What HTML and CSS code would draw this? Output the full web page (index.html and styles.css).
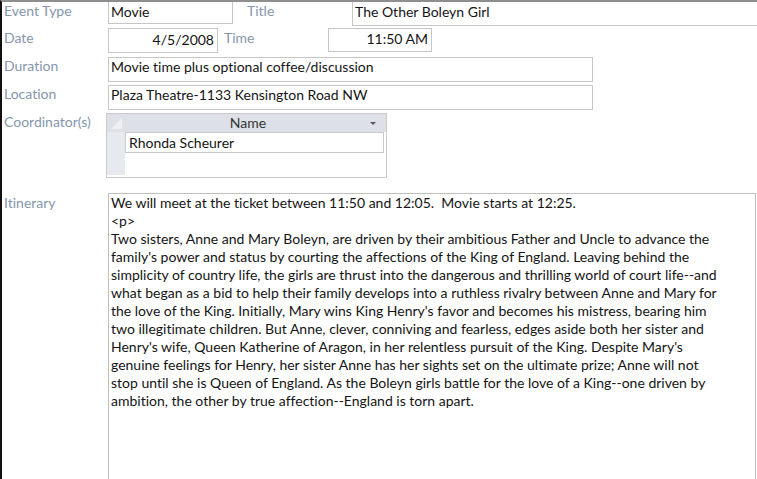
FILE: index.html
```html
<!DOCTYPE html>
<html>
<head>
<meta charset="utf-8">
<title>Event</title>
<link rel="stylesheet" href="styles.css">
</head>
<body>
<div class="form">
  <div class="row r1">
    <div class="lbl">Event Type</div>
    <div class="box box-type">Movie</div>
    <div class="lbl lbl-title">Title</div>
    <div class="box box-title">The Other Boleyn Girl</div>
  </div>
  <div class="row r2">
    <div class="lbl lbl-r2">Date</div>
    <div class="box box-date">4/5/2008</div>
    <div class="lbl lbl-r2 lbl-time">Time</div>
    <div class="box box-time">11:50 AM</div>
  </div>
  <div class="row r3">
    <div class="lbl">Duration</div>
    <div class="box box-wide">Movie time plus optional coffee/discussion</div>
  </div>
  <div class="row r3">
    <div class="lbl">Location</div>
    <div class="box box-wide">Plaza Theatre-1133 Kensington Road NW</div>
  </div>
  <div class="row r5">
    <div class="lbl">Coordinator(s)</div>
    <div class="grid">
      <div class="g-head">
        <div class="g-sel g-sel-head">
          <svg width="18" height="18" viewBox="0 0 18 18"><polygon points="4,15 15,15 15,4" fill="#eef0f3"/></svg>
        </div>
        <div class="g-col">Name<span class="g-arrow"></span></div>
      </div>
      <div class="g-row">
        <div class="g-sel"></div>
        <div class="g-cell">Rhonda Scheurer</div>
      </div>
      <div class="g-row g-new">
        <div class="g-sel"></div>
        <div class="g-blank"></div>
      </div>
    </div>
  </div>
  <div class="row r6">
    <div class="lbl lbl-itin">Itinerary</div>
    <div class="box box-itin"><div class="itin-text">We will meet at the ticket between 11:50 and 12:05.  Movie starts at 12:25.
&lt;p&gt;
Two sisters, Anne and Mary Boleyn, are driven by their ambitious Father and Uncle to advance the
family's power and status by courting the affections of the King of England. Leaving behind the
simplicity of country life, the girls are thrust into the dangerous and thrilling world of court life--and
what began as a bid to help their family develops into a ruthless rivalry between Anne and Mary for
the love of the King. Initially, Mary wins King Henry's favor and becomes his mistress, bearing him
two illegitimate children. But Anne, clever, conniving and fearless, edges aside both her sister and
Henry's wife, Queen Katherine of Aragon, in her relentless pursuit of the King. Despite Mary's
genuine feelings for Henry, her sister Anne has her sights set on the ultimate prize; Anne will not
stop until she is Queen of England. As the Boleyn girls battle for the love of a King--one driven by
ambition, the other by true affection--England is torn apart.</div></div>
  </div>
</div>
</body>
</html>
```

FILE: styles.css
```css
html, body {
  margin: 0;
  padding: 0;
  background: #ffffff;
}
body {
  font-family: Lato, "Liberation Sans", sans-serif;
  font-size: 14px;
  color: #141414;
  font-variant-ligatures: none;
}
.form {
  width: 757px;
  height: 479px;
  box-sizing: border-box;
  border-top: 2px solid #8e8e8e;
  border-left: 2px solid #111111;
  overflow: hidden;
}
.row {
  display: flex;
  align-items: flex-start;
}
.r1 { height: 24px; }
.r2 { height: 31px; }
.r3 { height: 28px; }
.r5 { height: 80px; }
.r6 { height: 300px; }

.lbl {
  flex: none;
  width: 104px;
  padding-left: 2px;
  line-height: 18px;
  color: #8596ad;
  white-space: nowrap;
}
.lbl-title {
  margin-left: 12px;
  width: 105px;
}
.lbl-r2 { margin-top: 3px; }
.lbl-time { margin-left: 4px; }
.lbl-itin { margin-top: 1px; }

.box {
  flex: none;
  box-sizing: border-box;
  border: 1px solid #c6c6c6;
  line-height: 18px;
  padding: 0 2px;
  white-space: nowrap;
  background: #ffffff;
}
.box-type {
  width: 125px;
  height: 22px;
  border-top: none;
  padding-top: 1px;
}
.box-title {
  width: 420px;
  height: 24px;
  border-top: none;
  border-right: none;
  padding-top: 1px;
}
.box-date {
  margin-top: 2px;
  width: 110px;
  height: 25px;
  padding-top: 2px;
  padding-right: 3px;
  text-align: right;
}
.box-time {
  margin-top: 2px;
  width: 104px;
  height: 24px;
  padding-top: 1px;
  padding-right: 3px;
  text-align: right;
}
.box-wide {
  width: 485px;
  height: 25px;
}
.box-itin {
  width: 648px;
  height: 300px;
  border-color: #c0c0c0;
}
.itin-text {
  white-space: pre;
}

/* subform datasheet */
.grid {
  flex: none;
  box-sizing: border-box;
  width: 281px;
  height: 65px;
  margin-left: -2px;
  border: 1px solid #cacaca;
  background: #ffffff;
}
.g-head {
  display: flex;
  height: 18px;
  background: #dde1e7;
}
.g-sel {
  flex: none;
  width: 18px;
  background: #e6e9ee;
}
.g-sel-head {
  background: #dde1e7;
}
.g-sel svg { display: block; }
.g-col {
  position: relative;
  flex: none;
  width: 259px;
  box-sizing: border-box;
  padding-right: 13px;
  text-align: center;
  line-height: 18px;
  color: #333333;
}
.g-arrow {
  position: absolute;
  right: 8px;
  top: 8px;
  width: 0;
  height: 0;
  border-left: 3px solid transparent;
  border-right: 3px solid transparent;
  border-top: 3px solid #555555;
}
.g-row {
  display: flex;
  height: 21px;
}
.g-new { height: 22px; }
.g-cell {
  flex: none;
  box-sizing: border-box;
  width: 259px;
  border: 1px solid #cacaca;
  padding-left: 3px;
  line-height: 19px;
  white-space: nowrap;
}
.g-blank {
  flex: none;
  width: 259px;
}
```
